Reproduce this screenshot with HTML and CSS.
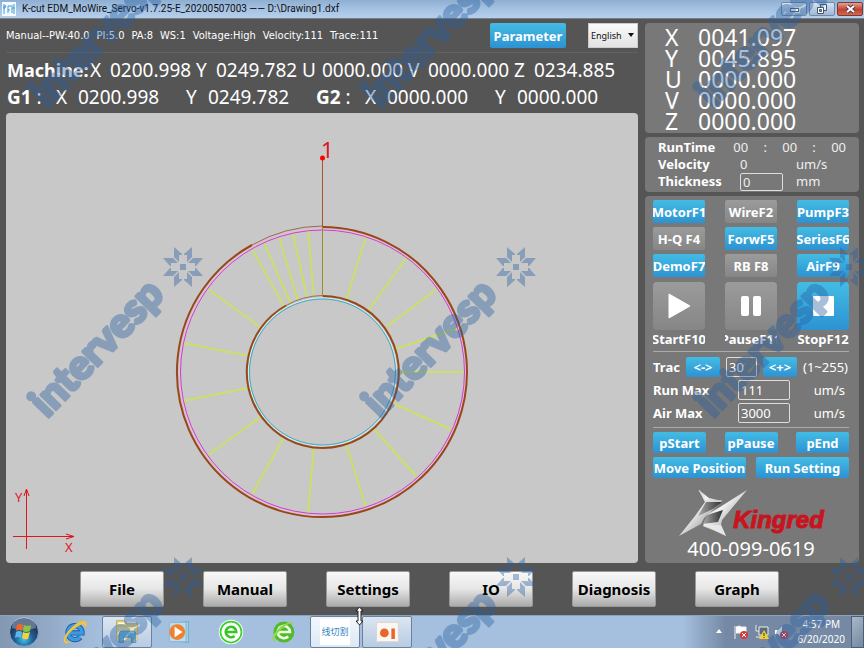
FILE: index.html
```html
<!DOCTYPE html>
<html lang="en">
<head>
<meta charset="utf-8">
<title>K-cut EDM_MoWire_Servo</title>
<link rel="stylesheet" href="styles.css">
</head>
<body>
<header class="titlebar">
  <svg class="app-icon" viewBox="0 0 14 14" aria-hidden="true"><rect width="14" height="14" fill="#f4faff"/><path d="M2 2v10M1 5h3M4 3l-2 4M6 4v7M6 4h3M6 8h2M10 3v8M12 2v10M10 6h3" stroke="#3f9dd0" fill="none"/></svg>
  <span class="title">K-cut EDM_MoWire_Servo-v1.7.25-E_20200507003 —— D:\Drawing1.dxf</span>
  <div class="window-buttons">
    <button class="win" aria-label="Minimize"><svg viewBox="0 0 24 12"><rect x="8.500" y="5.500" width="8" height="3" fill="#fff" stroke="#53647a"/></svg></button>
    <button class="win" aria-label="Restore"><svg viewBox="0 0 24 12"><path d="M10.500 1.500h6v6h-6z" fill="#e6eef8" stroke="#44556a"/><path d="M7.500 4.500h6v6h-6z" fill="#fff" stroke="#44556a"/><path d="M9.500 6.500h2v2h-2z" fill="#8aa" stroke="#44556a"/></svg></button>
    <button class="win close" aria-label="Close"><svg viewBox="0 0 24 12"><path d="M9 3l7 6M16 3l-7 6" stroke="#51394a" stroke-width="4"/><path d="M9 3l7 6M16 3l-7 6" stroke="#fff" stroke-width="2"/></svg></button>
  </div>
</header>

<main class="workspace">
  <section class="left">
    <div class="status">
      <p class="status-text"><span>Manual--PW:40.0</span><span>PI:5.0</span><span>PA:8</span><span>WS:1</span><span>Voltage:High</span><span>Velocity:111</span><span>Trace:111</span></p>
      <button class="blue parameter">Parameter</button>
      <div class="language"><select aria-label="Language"><option>English</option></select></div>
    </div>
    <div class="coords machine">
      <b>Machine:</b>
      <span class="axis"><i>X</i>0200.998</span><span class="axis"><i>Y</i>0249.782</span><span class="axis"><i>U</i>0000.000</span><span class="axis"><i>V</i>0000.000</span><span class="axis"><i>Z</i>0234.885</span>
    </div>
    <div class="coords guides">
      <span class="name"><b>G1</b> :</span><span class="axis"><i>X</i>0200.998</span><span class="axis"><i>Y</i>0249.782</span>
      <span class="name"><b>G2</b> :</span><span class="axis"><i>X</i>0000.000</span><span class="axis"><i>Y</i>0000.000</span>
    </div>
    <div class="canvas">
      <svg class="drawing" viewBox="0 0 632 450" role="img" aria-label="Cutting path">
        <g fill="none">
          <path class="ribs" d="M246 136L279 195M258 130L285 191M273 124L292 188M287 120L301 185M302 117L308 184M360 123L340 188M401 144L362 198M431 176L380 214M202 176L254 214M177 230L243 243M177 288L242 275M202 342L256 303M245 383L278 324M302 401L308 333M360 394L340 331M411 364L367 315M446 317L386 290M459 259H391M456 214L389 236"/>
          <circle cx="316.500" cy="259" r="143" stroke="#f0b8e0"/>
          <circle cx="316.500" cy="259" r="142" stroke="#cc3fd0"/>
          <path d="M316.500 114A145 145 0 1 1 246 132" stroke="#984718" stroke-width="2"/>
          <path d="M246 132A145 145 0 0 1 316.500 113" stroke="#9b6952"/>
          <circle cx="316.500" cy="259" r="74" stroke="#d9eef0"/>
          <circle cx="316.500" cy="259" r="73" stroke="#38abc6"/>
          <path d="M316.500 183A76 76 0 1 1 280 192.500" stroke="#984718" stroke-width="2"/>
          <path d="M280 192.500A76 76 0 0 1 316.500 182.500" stroke="#9b6952"/>
          <path d="M316.500 45V114" stroke="#a3582c"/>
          <path d="M316.500 114V183" stroke="#9a8c20"/>
          <path d="M7 423.500H68M60 421L68 423.500L60 426M20.500 436V376M18 383L20.500 376L23 383" stroke="#e0161e"/>
        </g>
        <circle cx="316.500" cy="45" r="2.500" fill="#f00"/>
        <g fill="#e0161e"><text x="315" y="45" font-size="22">1</text><text x="9" y="389" font-size="13">Y</text><text x="59" y="439" font-size="13">X</text></g>
      </svg>
    </div>
  </section>

  <aside class="right">
    <section class="panel readout">
      <p><span>X</span>0041.097</p><p><span>Y</span>0045.895</p><p><span>U</span>0000.000</p><p><span>V</span>0000.000</p><p><span>Z</span>0000.000</p>
    </section>
    <section class="panel run">
      <div class="time"><b>RunTime</b><span>00</span><span>:</span><span>00</span><span>:</span><span>00</span></div>
      <div class="measure"><b>Velocity</b><span class="amount">0</span><span>um/s</span></div>
      <div class="measure"><label for="thickness">Thickness</label><input id="thickness" value="0"><span>mm</span></div>
    </section>
    <section class="panel controls">
      <div class="keys">
        <button class="blue">MotorF1</button><button class="grey">WireF2</button><button class="blue">PumpF3</button>
        <button class="grey">H-Q F4</button><button class="blue">ForwF5</button><button class="blue">SeriesF6</button>
        <button class="blue">DemoF7</button><button class="grey">RB F8</button><button class="blue">AirF9</button>
      </div>
      <div class="transport">
        <div><button class="grey" aria-labelledby="start"><svg viewBox="0 0 48 48"><path d="M14 12L35 24L14 36Z" fill="#fff" stroke="#fff" stroke-linejoin="round"/></svg></button><span id="start">StartF10</span></div>
        <div><button class="grey" aria-labelledby="pause"><svg viewBox="0 0 48 48"><rect x="14" y="14" width="8" height="20" rx="2" fill="#fff"/><rect x="26" y="14" width="8" height="20" rx="2" fill="#fff"/></svg></button><span id="pause">PauseF11</span></div>
        <div><button class="blue" aria-labelledby="stop"><svg viewBox="0 0 48 48"><rect x="14" y="14" width="21" height="20" rx="1" fill="#fff"/></svg></button><span id="stop">StopF12</span></div>
      </div>
      <div class="trace"><label for="trac">Trac</label><button class="blue">&lt;-&gt;</button><input id="trac" value="30"><button class="blue">&lt;+&gt;</button><span>(1~255)</span></div>
      <div class="limit"><label for="runmax">Run Max</label><input id="runmax" value="111"><span>um/s</span></div>
      <div class="limit"><label for="airmax">Air Max</label><input id="airmax" value="3000"><span>um/s</span></div>
      <div class="points"><button class="blue">pStart</button><button class="blue">pPause</button><button class="blue">pEnd</button></div>
      <div class="moves"><button class="blue">Move Position</button><button class="blue">Run Setting</button></div>
      <div class="brand">
        <svg viewBox="0 0 69 47" aria-hidden="true">
          <defs><linearGradient id="steel" x1="0" y1="0" x2="1" y2="1"><stop offset="0" stop-color="#999"/><stop offset=".4" stop-color="#f2f2f2"/><stop offset=".7" stop-color="#aaa"/><stop offset="1" stop-color="#ddd"/></linearGradient><linearGradient id="shade" x1="0" y1="0" x2="1" y2="0"><stop offset="0" stop-color="#aaa"/><stop offset="1" stop-color="#303030"/></linearGradient></defs>
          <path d="M21 0L31 8L44 11L35 20L26 28L23 34L1 46L17 26L27 12Z" fill="url(#steel)"/>
          <path d="M28 12L44 12L35 19L20 26Z" fill="url(#shade)"/>
          <path d="M69 0L44 30L43 35L48 46L37 41L25 36L30 24L42 17Z" fill="url(#steel)"/>
          <path d="M29 25L45 20L40 32L25 34Z" fill="url(#shade)"/>
          <path d="M26 35L43 35L48 46Z" fill="#e7e7e7"/>
          <path d="M21 0L27 11H44" fill="none" stroke="#d8d8d8"/>
        </svg>
        <span>Kingred</span>
      </div>
      <p class="phone">400-099-0619</p>
    </section>
  </aside>
</main>

<nav class="menu">
  <button>File</button><button>Manual</button><button>Settings</button><button>IO</button><button>Diagnosis</button><button>Graph</button>
</nav>

<footer class="taskbar">
  <button class="task start" aria-label="Start"><svg viewBox="0 0 32 32"><defs><radialGradient id="orb" cy=".75"><stop offset="0" stop-color="#43c5ea"/><stop offset=".6" stop-color="#1d6199"/><stop offset="1" stop-color="#243c60"/></radialGradient></defs><circle cx="16" cy="16" r="14.500" fill="url(#orb)" stroke="#8ba7c4"/><path d="M4 12a12 11 0 0 1 24 0q-12 4-24 0" fill="#fff" opacity=".3"/><path d="M9 9q3-2 6 0l-1 6q-3-2-6 0z" fill="#f0652a"/><path d="M16 9q3 2 7 0l-1 6q-4 2-7 0z" fill="#8cc63f"/><path d="M8 16q3-2 6 0l-1 6q-3-2-6 0z" fill="#58b8ee"/><path d="M15 16q3 2 7 0l-2 7q-3 1-6-1z" fill="#fcd138"/></svg></button>
  <button class="task" aria-label="Internet Explorer"><svg viewBox="0 0 32 32"><path d="M9 17H24A8 8 0 1 0 22 22" fill="none" stroke="#1a5ba3" stroke-width="6"/><path d="M9 17H24A8 8 0 1 0 22 22" fill="none" stroke="#3a9ae0" stroke-width="4"/><path d="M4 28Q0 22 14 9Q26 0 29 5Q30 9 27 12Q28 5 20 9Q8 16 5 25Q5 28 12 26Q6 31 4 28" fill="#f3c33c"/></svg></button>
  <button class="task open" aria-label="File Explorer"><svg viewBox="0 0 32 32"><path d="M4 3h9l2 3h13v20H4z" fill="#ecd37c" stroke="#c5a64b"/><path d="M6 6h7M16 5h10" stroke="#fff" stroke-width="2"/><path d="M4 10h24v16H4z" fill="#f6e49d"/><path d="M7 28V18q0-3 3-3h13q3 0 3 3v10h-5v-6h-9v6z" fill="#74b5dc" stroke="#4c91bd"/></svg></button>
  <button class="task" aria-label="Media Player"><svg viewBox="0 0 32 32"><path d="M8 6l19-2v24l-19-2z" fill="#9fcce6" stroke="#6ea9ca"/><path d="M5 5h19v22H5z" fill="#badcf0" stroke="#82b6d3"/><circle cx="14" cy="16" r="9" fill="#f0802b"/><path d="M11 10l9 6-9 6z" fill="#fff"/></svg></button>
  <button class="task" aria-label="Browser"><svg viewBox="0 0 32 32"><circle cx="16" cy="16" r="14" fill="#fff"/><circle cx="16" cy="16" r="12" fill="none" stroke="#3fd02f" stroke-width="2"/><path d="M10 16H22A6 6 0 1 0 20 20.500" fill="none" stroke="#35c524" stroke-width="3"/></svg></button>
  <button class="task" aria-label="Safe browser"><svg viewBox="0 0 32 32"><circle cx="17" cy="16" r="12" fill="#55b92f"/><path d="M10 16H24A7 7 0 1 0 22 21" fill="none" stroke="#e9ffe0" stroke-width="3"/><path d="M6 27Q0 22 13 10Q27 1 27 7Q24 4 14 13Q4 22 7 27" fill="#8fd94a"/></svg></button>
  <button class="task open cut" lang="zh"><span>线切割</span></button>
  <button class="task open" aria-label="Recorder"><svg viewBox="0 0 32 32"><path d="M4 5h25v22H4z" fill="#faf6f2" stroke="#d9d2cc"/><circle cx="13" cy="17" r="5" fill="#e9662a"/><rect x="21" y="12" width="4" height="12" fill="#e9662a"/></svg></button>
  <div class="tray">
    <svg viewBox="0 0 74 18" aria-hidden="true"><path d="M2 10l3-4 3 4z" fill="#fff"/><path d="M21 16V3M22 4q4-2 5 0h5v6h-10" fill="#fff" stroke="#eee"/><circle cx="30" cy="12" r="4" fill="#d43a38"/><path d="M28 10l4 4M32 10l-4 4" stroke="#fff"/><path d="M45 4h9v8h-9zM42 2v6h3M42 14h8" fill="#596c7c" stroke="#eee"/><path d="M50 7l5 9H45z" fill="#f4d22c"/><path d="M50 10v3M50 14v1" stroke="#333"/><path d="M61 7h3l4-4v12l-4-4h-3z" fill="#fff"/><circle cx="70" cy="12" r="4" fill="#d43a38"/><path d="M68 10l4 4M72 10l-4 4" stroke="#fff"/></svg>
    <time>4:57 PM<br>6/20/2020</time>
    <button class="show-desktop" aria-label="Show desktop"></button>
  </div>
</footer>

<svg class="pointer" viewBox="0 0 9 20" aria-hidden="true"><path d="M4.500 1L8 5H6V15H8L4.500 19L1 15H3V5H1Z" fill="#fff" stroke="#222"/></svg>

<svg class="watermark" aria-hidden="true">
  <defs>
    <g id="mark">
      <text transform="translate(47 419) rotate(-46)">intervesp</text>
      <g transform="translate(183 267)">
        <rect x="-3" y="-3" width="6" height="6"/>
        <g id="petals"><path d="M-9-20L-1-13V-12H-4V-5L-9-10ZM9-20L1-13V-12H4V-5L9-10Z"/></g>
        <use href="#petals" transform="rotate(90)"/><use href="#petals" transform="rotate(180)"/><use href="#petals" transform="rotate(270)"/>
      </g>
    </g>
    <g id="row"><use href="#mark"/><use href="#mark" x="333"/><use href="#mark" x="666"/></g>
  </defs>
  <use href="#row" y="-310"/><use href="#row"/><use href="#row" y="310"/>
</svg>
</body>
</html>
```
FILE: styles.css
```css
* { box-sizing: border-box; }

body {
  margin: 0;
  min-height: 100vh;
  display: flex;
  flex-direction: column;
  overflow: hidden;
  background: #555;
  color: #fff;
  font: 13px/18px "Noto Sans", "DejaVu Sans", sans-serif;
}

p { margin: 0; }
i { font-style: normal; }
svg { display: block; }

button, input, select {
  font: inherit;
  color: inherit;
  margin: 0;
  padding: 0;
  border: 0;
  min-width: 0;
}

button {
  display: flex;
  align-items: center;
  justify-content: center;
  overflow: hidden;
  white-space: nowrap;
}

.blue, .grey {
  font-weight: bold;
  border-radius: 2px;
  background: linear-gradient(#43bce4, #2d92d2);
}

.grey {
  background: linear-gradient(#9b9b9b, #868686);
}

/* Title bar */
.titlebar {
  display: flex;
  align-items: center;
  height: 19px;
  padding-left: 2px;
  gap: 6px;
  color: #111;
  background: linear-gradient(#8faed0, #a5c2e3 50%, #b6d0ec);
  border-bottom: 1px solid #777f88;
}
.app-icon { width: 14px; height: 14px; }
.title { flex: 1; font: 10px/16px Roboto, sans-serif; white-space: nowrap; }
.window-buttons { display: flex; gap: 2px; padding-right: 1px; }
.win {
  width: 26px;
  height: 14px;
  border: 1px solid #7189a6;
  border-radius: 2px;
  background: linear-gradient(#d5e2f1, #9fb8d6);
}
.win svg { width: 24px; height: 12px; }
.close { border-color: #7b3a3a; background: linear-gradient(#e0a294, #c2402e 55%, #d3694f); }

/* Workspace */
.workspace {
  flex: 1;
  display: grid;
  grid-template-columns: 1fr 214px;
  gap: 7px;
  padding: 4px 5px 0 6px;
}
.left { display: flex; flex-direction: column; }

.status {
  display: flex;
  align-items: center;
  height: 30px;
  padding-bottom: 4px;
  border-bottom: 1px solid #626262;
}
.status-text { flex: 1; display: flex; gap: 7px; font-size: 11px; font-family: "DejaVu Sans Condensed", "DejaVu Sans", sans-serif; }
.parameter { width: 76px; height: 25px; margin-right: 22px; }
.language { position: relative; color: #111; }
.language select {
  appearance: none;
  display: block;
  width: 50px;
  height: 25px;
  padding-left: 2px;
  background: linear-gradient(#fafafa, #e2e2e2);
  border: 1px solid #ccc;
  font: 9px "Noto Sans", sans-serif;
}
.language::after {
  content: "";
  position: absolute;
  right: 4px;
  top: 10px;
  border: 3px solid transparent;
  border-top: 4px solid #111;
}

.coords { display: flex; height: 27px; align-items: center; font-size: 19px; line-height: 27px; white-space: nowrap; padding-left: 1px; }
.machine { margin-top: 4px; }
.machine b { width: 83px; font-size: 18px; }
.axis { display: flex; width: 106px; }
.axis i { width: 20px; }
.guides .name { width: 49px; }
.guides .axis { width: 130px; }
.guides .axis i { width: 22px; }

.canvas {
  flex: 1;
  display: flex;
  margin-top: 2px;
  min-height: 450px;
  border-radius: 4px;
  background: #c8c8c8;
}
.drawing { width: 100%; }
.ribs { stroke: #c9e069; stroke-width: 2; }

/* Right side */
.right { display: flex; flex-direction: column; gap: 4px; }
.panel { border-radius: 4px; background: #787878; }

.readout { padding: 4px 20px 1px; font-size: 23px; line-height: 21px; }
.readout p { display: flex; }
.readout span { width: 33px; }

.run { padding: 2px 0 0 13px; height: 55px; line-height: 17px; color: #eee; }
.run b, .run label { color: #fff; font-weight: bold; }
.time { display: flex; justify-content: space-between; padding-right: 13px; }
.time b { width: 60px; }
.measure { display: grid; grid-template-columns: 82px 43px 1fr; height: 17px; }
.measure span:last-child { padding-left: 13px; }

input {
  width: 100%;
  height: 18px;
  padding-left: 2px;
  background: none;
  border: 1px solid #ddd;
  border-radius: 2px;
}

.controls { flex: 1; padding: 4px 10px 2px 8px; display: flex; flex-direction: column; }
.keys { display: grid; grid-template-columns: repeat(3, 52px); justify-content: space-between; gap: 4px 0; }
.keys button { height: 23px; }
.transport { display: flex; justify-content: space-between; margin-top: 5px; padding-bottom: 3px; border-bottom: 1px solid #aaa; }
.transport div { width: 52px; display: flex; flex-direction: column; overflow: hidden; }
.transport button { height: 48px; border-radius: 4px; }
.transport svg { width: 48px; height: 48px; flex: none; }
.transport span { align-self: center; white-space: nowrap; font-weight: bold; }

.trace { display: flex; align-items: center; height: 20px; margin-top: 5px; white-space: nowrap; }
.trace label { width: 33px; font-weight: bold; }
.trace button { width: 34px; height: 20px; }
.trace input { width: 31px; height: 20px; margin: 0 6px; }
.trace span { margin-left: 6px; }
.limit { display: grid; grid-template-columns: 85px 52px 1fr; align-items: center; height: 20px; margin-top: 3px; }
.limit label { font-weight: bold; }
.limit input { height: 20px; }
.limit span { text-align: right; padding-right: 4px; }
.points, .moves { display: flex; justify-content: space-between; margin-top: 4px; }
.points { padding-top: 4px; border-top: 1px solid #aaa; }
.points button { width: 53px; height: 21px; }
.moves button { width: 93px; height: 21px; }

.brand { display: flex; justify-content: center; align-items: center; margin-top: 11px; height: 48px; color: #c8141e; }
.brand svg { width: 69px; height: 47px; flex: none; }
.brand span { font: italic bold 24px/24px "Liberation Sans", sans-serif; -webkit-text-stroke: 1px; margin: 14px 0 0 -14px; }
.phone { text-align: center; font-size: 20px; line-height: 22px; margin-top: 1px; }

/* Menu */
.menu { display: flex; justify-content: space-between; padding: 8px 85px 8px 80px; }
.menu button {
  width: 84px;
  height: 36px;
  color: #000;
  font-weight: bold;
  font-size: 15px;
  border: 1px solid #999;
  border-radius: 2px;
  background: linear-gradient(#f8f8f8, #e6e6e6 50%, #aaa);
}

/* Taskbar */
.taskbar {
  display: flex;
  gap: 2px;
  height: 33px;
  background: linear-gradient(90deg, #8297b2, #a5c0de 12%, #a5c0de 79%, #7589a5 84%);
  border-top: 1px solid #8ba3bf;
}
.task { width: 50px; background: none; }
.task svg { width: 28px; height: 28px; }
.start { width: 48px; }
.start svg { width: 32px; height: 32px; }
.open { border: 1px solid #6e8198; border-radius: 2px; background: linear-gradient(#dbe6f2, #b7cbe2); }
.cut { color: #3187c0; background: linear-gradient(#f2f7fc, #dce8f5); }
.cut span { padding: 0 1px; background: #fff; font: 9px/26px "Noto Sans CJK SC", sans-serif; }
.tray { display: flex; align-items: center; margin-left: auto; }
.tray svg { width: 74px; height: 18px; margin-right: 10px; }
.tray time { font: 10px/15px "Noto Sans", sans-serif; text-align: center; }
.show-desktop { width: 13px; height: 32px; margin-left: 6px; border: 1px solid #4c5f78; background: linear-gradient(135deg, #a9b8c9, #75889f); }

/* Overlays */
.pointer { position: fixed; left: 355px; top: 606px; width: 9px; height: 20px; }
.watermark {
  position: fixed;
  inset: 0;
  width: 100%;
  height: 100%;
  pointer-events: none;
  fill: #285fa0;
  opacity: .4;
  font: 900 41px Lato, sans-serif;
}
.watermark text { stroke: #285fa0; stroke-width: 3px; stroke-linejoin: round; }
```
